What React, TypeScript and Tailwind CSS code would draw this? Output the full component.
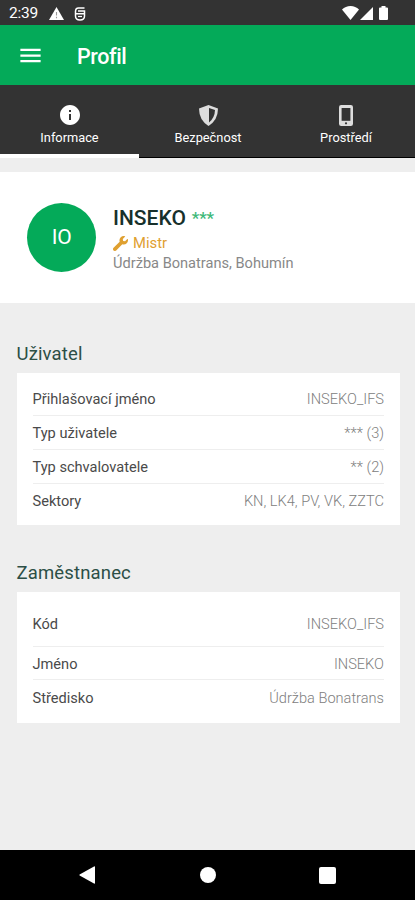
import React from "react";
import { MdInfo, MdMenu } from "react-icons/md";

type Row = {
  label: string;
  value: string;
  className: string;
};

const USER_ROWS: Row[] = [
  { label: "Přihlašovací jméno", value: "INSEKO_IFS", className: "h-[34px]" },
  { label: "Typ uživatele", value: "*** (3)", className: "h-[34px]" },
  { label: "Typ schvalovatele", value: "** (2)", className: "h-[34px]" },
  { label: "Sektory", value: "KN, LK4, PV, VK, ZZTC", className: "h-[34px]" },
];

const EMPLOYEE_ROWS: Row[] = [
  { label: "Kód", value: "INSEKO_IFS", className: "h-[46px]" },
  { label: "Jméno", value: "INSEKO", className: "h-[33px] pt-[3px]" },
  { label: "Středisko", value: "Údržba Bonatrans", className: "h-[35px]" },
];

const StatusBar: React.FC = () => (
  <div className="flex h-[25px] items-center bg-[#333333] pl-[9px] pr-[27px] text-white">
    <span className="w-[40px] pt-[3px] text-[15.5px] leading-none tracking-[-0.2px]">
      2:39
    </span>
    <svg className="mt-[2px] h-[13px] w-[15px]" viewBox="0 0 15 13">
      <path d="M7.5 0L15 13H0z" fill="#fff" />
      <path d="M7.5 5v3.5M7.5 9.7v1.5" stroke="#999" strokeWidth="1.1" />
    </svg>
    <svg
      className="ml-[10px] mt-[2px] h-[14px] w-[12px]"
      viewBox="0 0 12 14"
      fill="none"
      stroke="#fff"
      strokeWidth="1.5"
    >
      <path d="M10.5 1H4.5Q1.5 1 1.5 4.5V9Q1.5 13 6 13T10.5 9V6.8H1.5M4 4h6.5v3" />
      <path d="M4 9.5h4" strokeWidth="1.2" />
    </svg>
    <div className="ml-auto mt-[1px] flex items-center">
      <svg className="h-[14px] w-[17px]" viewBox="0 0 17 14" fill="#fff">
        <path d="M8.5 14L0 3.5Q3.5 0 8.5 0T17 3.5z" />
      </svg>
      <svg className="ml-[1px] h-[13px] w-[13px]" viewBox="0 0 13 13" fill="#fff">
        <path d="M13 0v13H0z" />
      </svg>
      <svg className="ml-[6px] h-[14px] w-[9px]" viewBox="0 0 9 14" fill="#fff">
        <path d="M2.5 0h4v1.5H8q1 0 1 1V13q0 1-1 1H1q-1 0-1-1V2.5q0-1 1-1h1.5z" />
      </svg>
    </div>
  </div>
);

const ShieldIcon: React.FC = () => (
  <svg className="h-[21px] w-[19px]" viewBox="0 0 19 21">
    <path d="M9.5 0L19 3.5Q19 15 9.5 21Q0 15 0 3.5z" fill="currentColor" />
    <path d="M10 3L16 5Q15.7 13 10 17.5z" fill="#333333" />
  </svg>
);

const PhoneIcon: React.FC = () => (
  <svg className="h-[21px] w-[14px]" viewBox="0 0 14 21">
    <rect width="14" height="21" rx="2.2" fill="currentColor" />
    <path d="M2.6 3h8.8v12.8H2.6z" fill="#333333" />
    <circle cx="7" cy="18.3" r="1.1" fill="#333333" />
  </svg>
);

const WrenchIcon: React.FC = () => (
  <svg
    className="mr-[5px] h-[15px] w-[15px]"
    viewBox="0 0 512 512"
    fill="currentColor"
  >
    <path d="M508 109c-2-9-14-12-20-5l-75 75-67-12-12-67 75-75c7-7 4-18-6-20-49-12-102 1-140 39-41 41-52 100-35 151L19 404c-25 25-25 65 0 90s65 25 90 0l209-209c51 17 110 6 151-35 38-38 51-92 39-141z" />
  </svg>
);

type TabProps = {
  label: string;
  icon: React.ReactNode;
  active?: boolean;
};

const Tab: React.FC<TabProps> = ({ label, icon, active }) => (
  <button
    className={`flex h-[73px] flex-col items-center pt-[18px] ${
      active
        ? "border-b-4 border-white text-white"
        : "border-b border-black text-[#dddddd]"
    }`}
  >
    <span className="flex h-[24px] items-center justify-center">{icon}</span>
    <span className="mt-[3px] text-[12.8px] leading-[16px] text-white">
      {label}
    </span>
  </button>
);

type SectionProps = {
  title: string;
  rows: Row[];
  className: string;
};

const Section: React.FC<SectionProps> = ({ title, rows, className }) => (
  <section className="pl-[16.5px] pr-[15px]">
    <h2 className="h-[38px] pt-[8px] text-[18.5px] leading-[22px] tracking-[0.15px] text-[#2c4f46]">
      {title}
    </h2>
    <div className={`bg-white px-4 ${className}`}>
      {rows.map((row) => (
        <div
          key={row.label}
          className={`flex items-center justify-between border-b border-[#eeeeee] pt-[2px] text-[14.6px] last:border-b-0 ${row.className}`}
        >
          <span className="text-[#4a4a4a]">{row.label}</span>
          <span className="font-light text-[#808080]">{row.value}</span>
        </div>
      ))}
    </div>
  </section>
);

const App: React.FC = () => {
  return (
    <div className="flex h-[900px] w-[415px] flex-col overflow-hidden bg-[#eeeeee] font-[Roboto,sans-serif]">
      <StatusBar />
      <header className="flex h-[60px] items-center bg-[#04aa59] pl-[17px] text-white">
        <MdMenu className="h-[27px] w-[27px]" />
        <h1 className="ml-[33px] pt-[3px] text-[21.5px] font-medium leading-none tracking-[-0.4px]">
          Profil
        </h1>
      </header>
      <nav className="grid grid-cols-[139px_138px_138px] bg-[#333333]">
        <Tab active label="Informace" icon={<MdInfo className="h-6 w-6" />} />
        <Tab label="Bezpečnost" icon={<ShieldIcon />} />
        <Tab label="Prostředí" icon={<PhoneIcon />} />
      </nav>

      <div className="mt-[14px] flex h-[131px] items-center bg-white pl-[27px]">
        <div className="flex h-[69px] w-[69px] items-center justify-center rounded-full bg-[#04aa59] pt-[1px] text-[21px] tracking-[-0.3px] text-white">
          IO
        </div>
        <div className="ml-[17px] pt-[5px]">
          <div className="flex h-[25px] items-center pb-[2px] text-[21px] font-medium text-[#17302b]">
            INSEKO
            <span className="ml-[6px] text-[17px] tracking-[-0.2px] text-[#3db878]">
              ***
            </span>
          </div>
          <div className="flex h-[22px] items-center text-[14.8px] text-[#dfa030]">
            <WrenchIcon />
            Mistr
          </div>
          <div className="h-[19px] text-[14.6px] leading-[19px] text-[#888888]">
            Údržba Bonatrans, Bohumín
          </div>
        </div>
      </div>

      <div className="mt-[32px] flex flex-col gap-[29px]">
        <Section title="Uživatel" rows={USER_ROWS} className="pb-[7px] pt-[9px]" />
        <Section
          title="Zaměstnanec"
          rows={EMPLOYEE_ROWS}
          className="pb-[8px] pt-[9px]"
        />
      </div>

      <footer className="mt-auto flex h-[50px] items-center bg-black pl-[79px]">
        <svg className="h-[18px] w-[16px]" viewBox="0 0 16 18" fill="#fff">
          <path d="M15 .5Q16 0 16 1V17Q16 18 15 17.5L.6 9.5Q0 9 .6 8.5z" />
        </svg>
        <div className="ml-[105px] h-4 w-4 rounded-full bg-white" />
        <div className="ml-[103px] h-[17px] w-[17px] rounded-[2px] bg-white" />
      </footer>
    </div>
  );
};

export default App;
